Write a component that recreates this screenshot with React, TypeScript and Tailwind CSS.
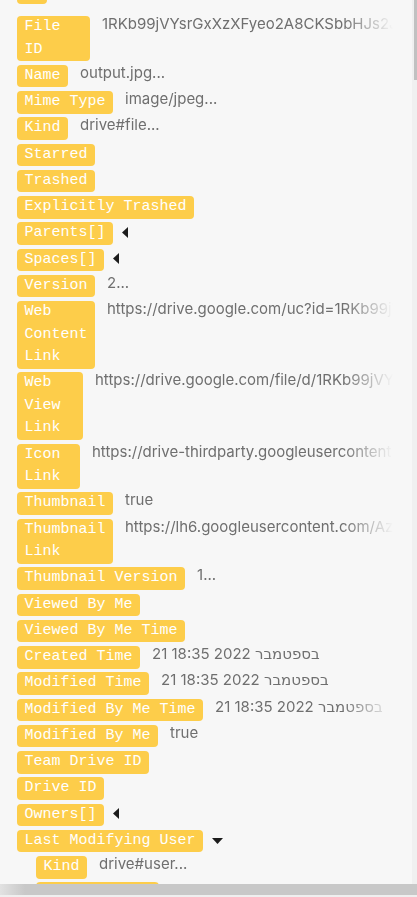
type Row = {
  label: string;
  value?: string;
  width?: string;
  arrow?: "left" | "down";
  nested?: boolean;
};

const DATE = "21 בספטמבר 2022 18:35";

const rows: Row[] = [
  { label: "File ID", value: "1RKb99jVYsrGxXzXFyeo2A8CKSbbHJs2J5xQm", width: "w-[73px]" },
  { label: "Name", value: "output.jpg..." },
  { label: "Mime Type", value: "image/jpeg..." },
  { label: "Kind", value: "drive#file..." },
  { label: "Starred" },
  { label: "Trashed" },
  { label: "Explicitly Trashed" },
  { label: "Parents[]", arrow: "left" },
  { label: "Spaces[]", arrow: "left" },
  { label: "Version", value: "2..." },
  {
    label: "Web Content Link",
    value: "https://drive.google.com/uc?id=1RKb99jVYsrGxXzXFyeo2A8CKSbbHJs2J&export=download",
    width: "w-[78px]",
  },
  {
    label: "Web View Link",
    value: "https://drive.google.com/file/d/1RKb99jVYsrGxXzXFyeo2A8CKSbbHJs2J/view?usp=drivesdk",
    width: "w-[66px]",
  },
  {
    label: "Icon Link",
    value: "https://drive-thirdparty.googleusercontent.com/16/type/image/jpeg",
    width: "w-[63px]",
  },
  { label: "Thumbnail", value: "true" },
  {
    label: "Thumbnail Link",
    value: "https://lh6.googleusercontent.com/AzXf4kQ2vR8m1pLx0s220",
    width: "w-[96px]",
  },
  { label: "Thumbnail Version", value: "1..." },
  { label: "Viewed By Me" },
  { label: "Viewed By Me Time" },
  { label: "Created Time", value: DATE },
  { label: "Modified Time", value: DATE },
  { label: "Modified By Me Time", value: DATE },
  { label: "Modified By Me", value: "true" },
  { label: "Team Drive ID" },
  { label: "Drive ID" },
  { label: "Owners[]", arrow: "left" },
  { label: "Last Modifying User", arrow: "down" },
  { label: "Kind", value: "drive#user...", nested: true },
  { label: "Display Name", nested: true },
];

function Badge({ label, width }: { label: string; width?: string }) {
  return (
    <span
      className={`shrink-0 rounded-[4px] bg-[#fdcd4a] px-[7.5px] font-['Liberation_Mono',monospace] text-[15px] leading-[22.5px] text-white ${
        width ?? ""
      }`}
    >
      {label}
    </span>
  );
}

function Arrow({ dir }: { dir: "left" | "down" }) {
  if (dir === "left") {
    return (
      <svg className="ml-[9px] -mt-[3px] self-center shrink-0" width="6" height="11" viewBox="0 0 6 11">
        <path d="M6 0 L0 5.5 L6 11 Z" fill="#1c1c1c" />
      </svg>
    );
  }
  return (
    <svg className="ml-[9px] self-center shrink-0" width="11" height="6" viewBox="0 0 11 6">
      <path d="M0 0 L11 0 L5.5 6 Z" fill="#1c1c1c" />
    </svg>
  );
}

export default function App() {
  return (
    <div className="flex h-screen w-full flex-col overflow-hidden bg-[#f7f7f7]">
      <div className="flex min-h-0 flex-1">
        <div className="min-w-0 flex-1 overflow-hidden pl-[17px] pr-[19px]">
          {/* bottom edge of the row above, scrolled out of view */}
          <div className="mb-[12.5px] h-[3.5px] w-[30px] rounded-b-[4px] bg-[#fdcd4a]" />
          <div className="flex flex-col gap-[3.75px]">
            {rows.map((row, i) => (
              <div
                key={i}
                className={`flex items-start ${row.nested ? "pl-[19px]" : ""}`}
              >
                <Badge label={row.label} width={row.width} />
                {row.value && (
                  <span className="-mt-[3px] ml-3 min-w-0 flex-1 overflow-hidden whitespace-nowrap font-['Inter','Noto_Sans','DejaVu_Sans',sans-serif] text-[15px] leading-[22.5px] text-[#6f6f6f] [-webkit-mask-image:linear-gradient(to_right,#000_calc(100%_-_50px),transparent)] [mask-image:linear-gradient(to_right,#000_calc(100%_-_50px),transparent)]">
                    {row.value}
                  </span>
                )}
                {row.arrow && <Arrow dir={row.arrow} />}
              </div>
            ))}
          </div>
        </div>
        {/* vertical scrollbar */}
        <div className="w-[5px] shrink-0 bg-[#f0f0f0] pl-[1.5px]">
          <div className="h-[80px] bg-[#c1c1c1]" />
        </div>
      </div>
      {/* horizontal scrollbar */}
      <div className="h-[13px] shrink-0 bg-[#efefef]">
        <div className="h-[11px] bg-linear-to-r from-[#e2e2e2] to-[#c8c8c8] to-[6%]" />
      </div>
    </div>
  );
}
